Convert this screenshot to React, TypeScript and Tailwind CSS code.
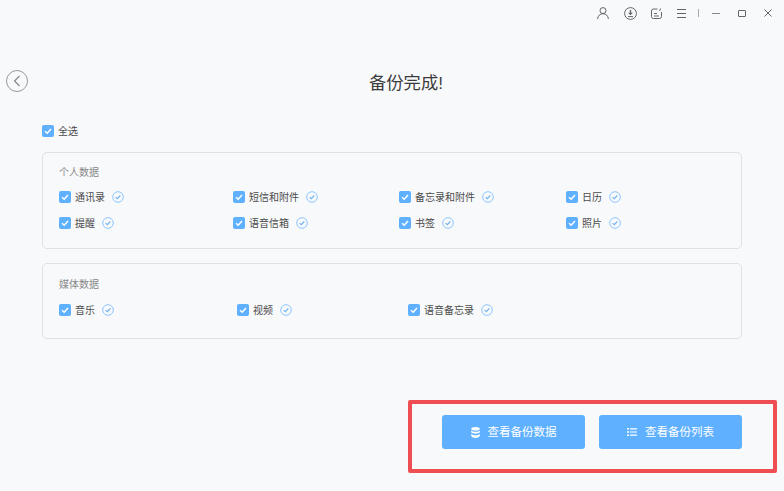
const personal = ["通讯录", "短信和附件", "备忘录和附件", "日历", "提醒", "语音信箱", "书签", "照片"]
const media = ["音乐", "视频", "语音备忘录"]

function CheckBox() {
  return (
    <span className="flex h-[12px] w-[12px] shrink-0 items-center justify-center rounded-[2px] bg-[#5fb0ff]">
      <svg width="10" height="10" viewBox="0 0 10 10" fill="none">
        <path d="M2 5.2l2.2 2L8 3" stroke="#fff" strokeWidth="1.5" />
      </svg>
    </span>
  )
}

function DoneIcon() {
  return (
    <svg width="12" height="12" viewBox="0 0 12 12" fill="none" className="shrink-0">
      <circle cx="6" cy="6" r="5.3" stroke="#8cc5ff" strokeWidth="1" />
      <path d="M3.6 6.2l1.7 1.5 3-3.2" stroke="#6fb2f2" strokeWidth="1.1" />
    </svg>
  )
}

function Item({ label }: { label: string }) {
  return (
    <div className="flex h-[14px] items-center">
      <CheckBox />
      <span className="ml-[4px] pt-[1px] text-[10px] leading-[14px] text-[#4a4a4a]">{label}</span>
      <span className="ml-[7px]">
        <DoneIcon />
      </span>
    </div>
  )
}

function TopBar() {
  return (
    <div className="flex h-[26px] shrink-0 items-center justify-end pr-[12px]">
      <svg width="12" height="12" viewBox="0 0 12 12" fill="none" stroke="#666" strokeWidth="1" className="mr-[15px]">
        <circle cx="6" cy="3.600" r="3" />
        <path d="M.6 12c.3-3.400 2.500-5.300 5.400-5.300s5.100 1.900 5.400 5.300" />
      </svg>
      <svg width="13" height="13" viewBox="0 0 13 13" fill="none" stroke="#666" className="mr-[14px]">
        <circle cx="6.500" cy="6.500" r="5.900" />
        <path d="M6.500 3v3.500" strokeWidth="1.400" />
        <path d="M4 5.800l2.500 2.500L9 5.800z" fill="#666" stroke="none" />
        <path d="M4 9.600h5" />
      </svg>
      <svg width="11" height="11" viewBox="0 0 11 11" fill="none" stroke="#666" className="mr-[15px]">
        <path d="M6.500 1H2.500A2 2 0 0 0 .5 3v5.500a2 2 0 0 0 2 2h6a2 2 0 0 0 2-2V4" />
        <path d="M3 5.500h3M3 8h5" />
        <path d="M8.500 3l1.200-2.500" />
      </svg>
      <svg width="9" height="9" viewBox="0 0 9 9" fill="none" stroke="#666" className="mr-[12px]">
        <path d="M0 .5h9M0 4.500h9M0 8.500h9" />
      </svg>
      <span className="mr-[13px] h-[8px] w-px bg-[#aaa]" />
      <span className="mr-[18px] h-px w-[8px] bg-[#888]" />
      <span className="mr-[18px] h-[7px] w-[8px] rounded-[1px] border border-[#666]" />
      <svg width="8" height="8" viewBox="0 0 8 8" fill="none" stroke="#666">
        <path d="M.5.500l7 7M7.500.500l-7 7" />
      </svg>
    </div>
  )
}

function DbIcon() {
  return (
    <svg width="9" height="11" viewBox="0 0 9 11" fill="#fff">
      <ellipse cx="4.500" cy="1.800" rx="4.300" ry="1.800" />
      <path d="M.2 3.300c.8 1 2.400 1.500 4.300 1.500s3.500-.5 4.300-1.500v2c-.8 1-2.400 1.400-4.300 1.400S1 6.300.2 5.300z" />
      <path d="M.2 6.800c.8 1 2.400 1.500 4.300 1.500s3.500-.5 4.300-1.500v2.200C8 10.200 6.400 11 4.500 11S1 10.200.2 9z" />
    </svg>
  )
}

function ListIcon() {
  return (
    <svg width="10" height="8" viewBox="0 0 10 8" fill="#fff">
      <path d="M0 0h2v1.600H0zM3 .2h7v1.200H3zM0 3.200h2v1.600H0zM3 3.400h7v1.200H3zM0 6.400h2V8H0zM3 6.600h7v1.200H3z" />
    </svg>
  )
}

export default function App() {
  return (
    <div
      className="flex h-[491px] w-[784px] flex-col overflow-hidden bg-[#f8f9fb]"
      style={{ fontFamily: '"Liberation Sans", "Noto Sans CJK SC", sans-serif' }}
    >
      <TopBar />

      <div className="relative mt-[30px] flex h-[55px] shrink-0 items-center justify-center pb-[1px] pl-[28px]">
        <button className="absolute left-[6px] top-[14px] flex h-[22px] w-[22px] items-center justify-center rounded-full border-[1.5px] border-[#999]">
          <svg width="8" height="12" viewBox="0 0 8 12" fill="none" stroke="#888" strokeWidth="1.200">
            <path d="M6.500 1L1.500 6l5 5" />
          </svg>
        </button>
        <h1 className="text-[17.300px] font-normal leading-[24px] text-[#3c3c3c]">备份完成!</h1>
      </div>

      <div className="flex flex-col px-[42px]">
        <div className="mt-[13px] flex h-[14px] items-center">
          <CheckBox />
          <span className="ml-[4px] pt-[1px] text-[10px] leading-[14px] text-[#4a4a4a]">全选</span>
        </div>

        <section className="mt-[14px] h-[97px] rounded-[5px] border border-[#dfe1e4] px-[16px] pt-[14px]">
          <h2 className="text-[10px] font-normal leading-[12px] text-[#888]">个人数据</h2>
          <div className="mt-[11px] grid grid-cols-[174px_166px_167px_1fr] gap-y-[12px]">
            {personal.map((label) => (
              <Item key={label} label={label} />
            ))}
          </div>
        </section>

        <section className="mt-[14px] h-[76px] rounded-[5px] border border-[#dfe1e4] px-[16px] pt-[15px]">
          <h2 className="text-[10px] font-normal leading-[12px] text-[#888]">媒体数据</h2>
          <div className="mt-[12px] grid grid-cols-[178px_171px_1fr]">
            {media.map((label) => (
              <Item key={label} label={label} />
            ))}
          </div>
        </section>
      </div>

      <div className="ml-[408px] mt-[61px] flex h-[73px] w-[369px] items-start justify-end gap-[14px] rounded-[2px] border-[4px] border-[#ef4f52] pr-[31px] pt-[11px]">
        <button className="flex h-[34px] w-[143px] items-center justify-center gap-[8px] rounded-[3px] bg-[#5fb0ff] text-[11.500px] text-white">
          <DbIcon />
          <span className="pt-[2px]">查看备份数据</span>
        </button>
        <button className="flex h-[34px] w-[143px] items-center justify-center gap-[8px] rounded-[3px] bg-[#5fb0ff] text-[11.500px] text-white">
          <ListIcon />
          <span className="pt-[2px]">查看备份列表</span>
        </button>
      </div>
    </div>
  )
}
